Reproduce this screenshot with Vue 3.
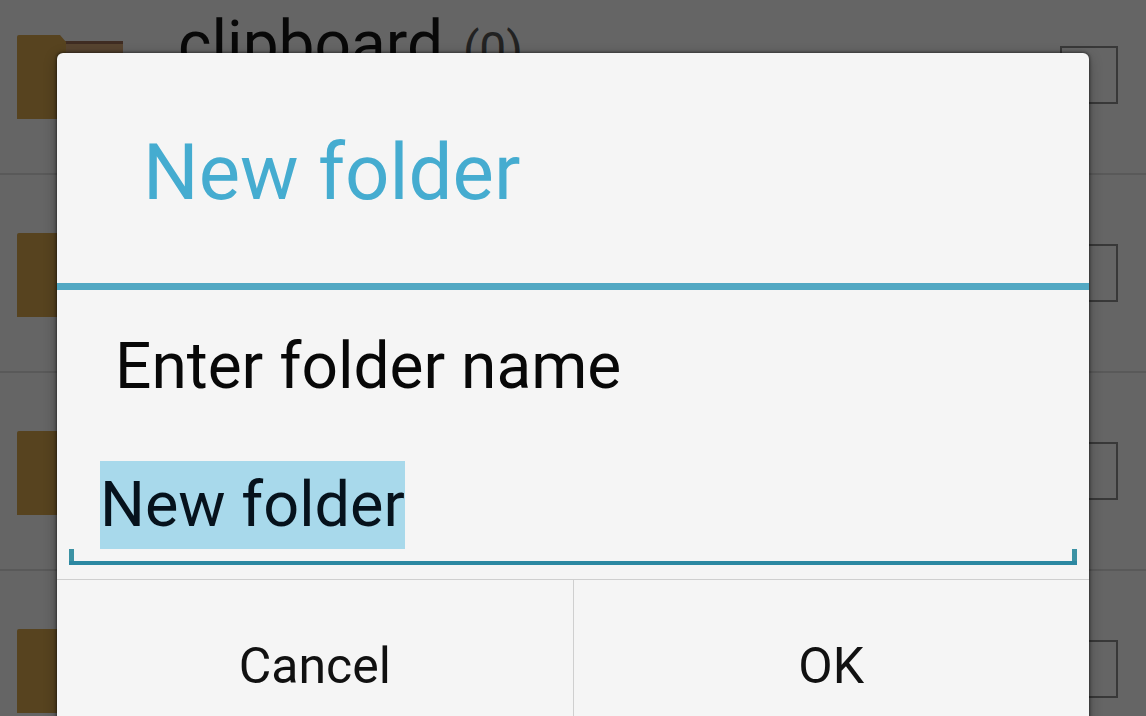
<script setup>
import { onMounted, ref } from 'vue'

const rows = [
  { id: 1, name: 'clipboard', count: 0 },
  { id: 2, name: '', count: null },
  { id: 3, name: '', count: null },
  { id: 4, name: '', count: null },
]
const folderName = ref('New folder')
const field = ref(null)

onMounted(() => {
  field.value.focus()
  field.value.select()
})
</script>

<template>
  <div class="screen">
    <ul class="files" aria-hidden="true">
      <li v-for="row in rows" :key="row.id" class="row">
        <svg class="folder" viewBox="0 0 108 86">
          <path d="M44 7h63v16H44z" fill="#503420" />
          <path d="M1 3q0-2 2-2h41l6 7h6v77H1z" fill="#57431f" />
          <path d="M50 10h57v75H50z" fill="#574430" />
          <path d="M50 7h57v3H50z" fill="#3f2c22" />
        </svg>
        <span class="name">
          {{ row.name }}
          <span v-if="row.count !== null" class="count">({{ row.count }})</span>
        </span>
        <input type="checkbox" class="check" tabindex="-1" aria-label="Select item" />
      </li>
    </ul>

    <div class="overlay">
      <form class="dialog" role="dialog" aria-labelledby="title" @submit.prevent>
        <h1 id="title" class="title">New folder</h1>
        <div class="body">
          <label class="label" for="folder-name">Enter folder name</label>
          <div class="field">
            <input id="folder-name" ref="field" v-model="folderName" type="text" spellcheck="false" autocomplete="off" />
          </div>
        </div>
        <div class="actions">
          <button type="button">Cancel</button>
          <button type="submit">OK</button>
        </div>
      </form>
    </div>
  </div>
</template>

<style>
body {
  margin: 0;
  background: #656565;
}
</style>

<style scoped>
.screen {
  position: relative;
  height: 100vh;
  overflow: hidden;
  background: #656565;
  font-family: Roboto, "Noto Sans", sans-serif;
  color: #080808;
}
.files {
  list-style: none;
  margin: -23px 0 0;
  padding: 0;
}
.row {
  box-sizing: border-box;
  display: flex;
  align-items: center;
  height: 198px;
  padding: 0 28px 0 16px;
  border-bottom: 2px solid #595959;
}
.folder {
  flex: none;
  width: 108px;
  height: 86px;
  margin-top: 4px;
}
.name {
  flex: 1;
  align-self: flex-start;
  padding-top: 30px;
  margin-left: 54px;
  font-size: 64px;
  line-height: 76px;
}
.count {
  margin-left: 4px;
  font-size: 48px;
  color: #222;
}
.check {
  appearance: none;
  flex: none;
  box-sizing: border-box;
  width: 58px;
  height: 58px;
  margin: 0;
  border: 2px solid #383838;
}
.overlay {
  position: absolute;
  inset: 0;
  padding: 53px 57px 0;
}
.dialog {
  background: #f5f5f5;
  border-radius: 6px;
  box-shadow: 0 0 3px 1px rgba(0, 0, 0, 0.45), 0 4px 14px rgba(0, 0, 0, 0.3);
}
.title {
  margin: 0;
  padding: 74px 86px 64px;
  border-bottom: 7px solid #52a8c3;
  font-size: 78px;
  line-height: 92px;
  font-weight: 400;
  color: #45acd0;
}
.body {
  padding: 39px 12px 14px;
}
.label {
  display: block;
  padding: 0 46px;
  font-size: 64px;
  line-height: 76px;
}
.field {
  position: relative;
  margin-top: 56px;
  padding: 0 31px 12px;
  border-bottom: 4px solid #2c88a2;
}
.field::before,
.field::after {
  content: "";
  position: absolute;
  bottom: 0;
  width: 5px;
  height: 12px;
  background: #3c92a4;
}
.field::before {
  left: 0;
}
.field::after {
  right: 0;
}
.field input {
  display: block;
  box-sizing: border-box;
  width: 100%;
  height: 88px;
  margin: 0;
  padding: 0;
  border: 0;
  outline: 0;
  background: transparent;
  font: inherit;
  font-size: 63px;
  line-height: 88px;
  color: #06121c;
  caret-color: transparent;
}
.field input::selection {
  background: rgba(167, 217, 235, 0.99);
  color: #06121c;
}
.actions {
  display: flex;
  border-top: 1px solid #cfcfcf;
}
.actions button {
  flex: 1;
  height: 172px;
  margin: 0;
  padding: 0;
  border: 0;
  background: transparent;
  font: inherit;
  font-size: 50px;
  color: #111;
}
.actions button + button {
  border-left: 1px solid #cfcfcf;
}
</style>
